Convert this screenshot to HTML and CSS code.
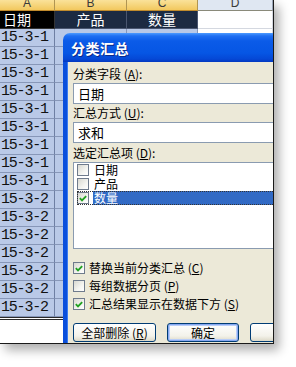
FILE: index.html
```html
<!DOCTYPE html>
<html lang="zh-CN">
<head>
<meta charset="utf-8">
<title>分类汇总</title>
<link rel="stylesheet" href="styles.css">
</head>
<body>
<div class="shot">
  <div class="sheet">
    <div class="hdr sel">A</div><div class="hdr sel">B</div><div class="hdr sel">C</div><div class="hdr">D</div>
    <div class="cell top black">日期</div><div class="cell top navy">产品</div><div class="cell top navy">数量</div><div class="cell white"></div>
    <div class="cell num">15-3-1</div><div class="cell data"></div><div class="cell data"></div><div class="cell white"></div>
    <div class="cell num">15-3-1</div><div class="cell data"></div><div class="cell data"></div><div class="cell white"></div>
    <div class="cell num">15-3-1</div><div class="cell data"></div><div class="cell data"></div><div class="cell white"></div>
    <div class="cell num">15-3-1</div><div class="cell data"></div><div class="cell data"></div><div class="cell white"></div>
    <div class="cell num">15-3-1</div><div class="cell data"></div><div class="cell data"></div><div class="cell white"></div>
    <div class="cell num">15-3-1</div><div class="cell data"></div><div class="cell data"></div><div class="cell white"></div>
    <div class="cell num">15-3-1</div><div class="cell data"></div><div class="cell data"></div><div class="cell white"></div>
    <div class="cell num">15-3-1</div><div class="cell data"></div><div class="cell data"></div><div class="cell white"></div>
    <div class="cell num">15-3-1</div><div class="cell data"></div><div class="cell data"></div><div class="cell white"></div>
    <div class="cell num">15-3-2</div><div class="cell data"></div><div class="cell data"></div><div class="cell white"></div>
    <div class="cell num">15-3-2</div><div class="cell data"></div><div class="cell data"></div><div class="cell white"></div>
    <div class="cell num">15-3-2</div><div class="cell data"></div><div class="cell data"></div><div class="cell white"></div>
    <div class="cell num">15-3-2</div><div class="cell data"></div><div class="cell data"></div><div class="cell white"></div>
    <div class="cell num">15-3-2</div><div class="cell data"></div><div class="cell data"></div><div class="cell white"></div>
    <div class="cell num">15-3-2</div><div class="cell data"></div><div class="cell data"></div><div class="cell white"></div>
    <div class="cell num">15-3-2</div><div class="cell data"></div><div class="cell data"></div><div class="cell white"></div>
  </div>

  <div class="dialog">
    <div class="titlebar">分类汇总</div>
    <div class="body">
      <div class="label">分类字段 (<u>A</u>):</div>
      <div class="combo">日期</div>
      <div class="label">汇总方式 (<u>U</u>):</div>
      <div class="combo">求和</div>
      <div class="label tall">选定汇总项 (<u>D</u>):</div>
      <div class="list">
        <div class="item"><span class="cb"></span><span class="txt">日期</span></div>
        <div class="item"><span class="cb"></span><span class="txt">产品</span></div>
        <div class="item focus"><span class="cb"><svg viewBox="0 0 11 11" width="11" height="11"><path d="M2 5.2 L4.4 7.6 L9 2.8" fill="none" stroke="#21a121" stroke-width="2"/></svg></span><span class="txt selected">数量</span></div>
      </div>
      <div class="checks">
        <div class="check"><span class="cb"><svg viewBox="0 0 11 11" width="11" height="11"><path d="M2 5.2 L4.4 7.6 L9 2.8" fill="none" stroke="#21a121" stroke-width="2"/></svg></span><span>替换当前分类汇总 (<u>C</u>)</span></div>
        <div class="check"><span class="cb"></span><span>每组数据分页 (<u>P</u>)</span></div>
        <div class="check"><span class="cb"><svg viewBox="0 0 11 11" width="11" height="11"><path d="M2 5.2 L4.4 7.6 L9 2.8" fill="none" stroke="#21a121" stroke-width="2"/></svg></span><span>汇总结果显示在数据下方 (<u>S</u>)</span></div>
      </div>
      <div class="buttons">
        <div class="btn wide">全部删除 (<u>R</u>)</div>
        <div class="btn default">确定</div>
        <div class="btn">取消</div>
      </div>
    </div>
  </div>
</div>
</body>
</html>
```

FILE: styles.css
```css
* { box-sizing: border-box; margin: 0; padding: 0; }
html, body { background: #fff; }
body {
  width: 296px;
  height: 367px;
  overflow: hidden;
  font-family: "Noto Sans CJK SC", sans-serif;
}

.shot {
  position: relative;
  width: 274px;
  height: 344px;
  overflow: hidden;
  background: #fff;
  border-right: 1px solid #1a1a1a;
  border-bottom: 1px solid #1a1a1a;
  box-shadow: 5px 6px 10px rgba(0, 0, 0, 0.32);
}

/* spreadsheet */
.sheet {
  display: grid;
  grid-template-columns: 55px 72px 71px 75px;
  grid-template-rows: 11px repeat(17, 18px);
  border-bottom: 3px double #2a2a2a;
}
.hdr {
  display: flex;
  align-items: flex-end;
  justify-content: center;
  overflow: hidden;
  font: 12px/12px "Liberation Sans", sans-serif;
  padding-bottom: 1px;
  color: #3a3a3a;
  background: #dfe7f2;
  border-right: 1px solid #9aa6b8;
  border-bottom: 1px solid #8a8a7a;
}
.hdr.sel {
  background: linear-gradient(#fae29a, #f2c85e);
  border-right-color: #b09552;
  border-bottom-color: #c08a2c;
}
.cell {
  display: flex;
  align-items: center;
  border-right: 1px solid #8797b8;
  border-bottom: 1px solid #8797b8;
  overflow: hidden;
  white-space: nowrap;
  line-height: 17px;
}
.top { font-size: 14px; color: #fff; }
.black { background: #000; padding-left: 3px; border-color: #333; }
.navy { background: #1c2a42; justify-content: center; border-color: #4a5670; }
.white { background: #fff; border-color: #d4d8e0; }
.data { background: #b9c9e7; }
.num {
  background: #b9c9e7;
  font: 15px/17px "Liberation Mono", monospace;
  letter-spacing: -1.2px;
  color: #111;
  padding-left: 1px;
  border-right-color: #6e7fa3;
}

/* dialog */
.dialog {
  position: absolute;
  left: 63px;
  top: 33px;
  width: 250px;
  height: 340px;
  display: flex;
  flex-direction: column;
  font-size: 12px;
  line-height: 14px;
  color: #000;
}
.titlebar {
  height: 29px;
  flex: none;
  display: flex;
  align-items: center;
  padding-left: 8px;
  padding-top: 1px;
  border-top-left-radius: 7px;
  background: linear-gradient(#4d9bff 0, #1f6ff2 3px, #0b5be8 8px, #0656e4 20px, #0548d6 26px, #0338c0 29px);
  color: #fff;
  font-size: 14px;
  line-height: 18px;
  font-weight: bold;
  letter-spacing: 0.5px;
  text-shadow: 1px 1px 0 #0a2a8a;
}
.body {
  flex: 1;
  display: flex;
  flex-direction: column;
  background: #ece9d8;
  border-left: 4px solid #0a4fdc;
  box-shadow: inset 1px 0 0 #3a7cf0;
  padding: 3px 0 0 6px;
}
.label {
  height: 18px;
  display: flex;
  align-items: center;
  white-space: nowrap;
}
.label.tall { height: 19px; }
.combo {
  height: 21px;
  display: flex;
  align-items: center;
  padding-left: 4px;
  background: #fff;
  border: 1px solid #8a9bb0;
  border-right: none;
  font-size: 13px;
}
.list {
  height: 87px;
  background: #fff;
  border: 1px solid #8a9bb0;
  border-right: none;
  padding: 0 0 0 3px;
  display: flex;
  flex-direction: column;
}
.item {
  height: 14px;
  display: flex;
  align-items: center;
  font-size: 12px;
  line-height: 14px;
}
.item .cb { margin-right: 4px; }
.item .txt { height: 14px; display: flex; align-items: center; padding-left: 1px; }
.item .selected {
  flex: 1;
  background: #316ac5;
  color: #fff;
}
.item.focus { outline: 1px dotted #333; outline-offset: -1px; }
.cb {
  width: 12px;
  height: 12px;
  flex: none;
  display: flex;
  align-items: center;
  justify-content: center;
  border: 1px solid #6f7b8c;
  background: linear-gradient(135deg, #d8d8d0, #f4f4f0 60%, #fff);
}
.checks {
  margin-top: 10px;
  display: flex;
  flex-direction: column;
}
.check {
  height: 18px;
  display: flex;
  align-items: center;
  gap: 4px;
  white-space: nowrap;
}
.buttons {
  margin-top: 10px;
  display: flex;
  gap: 11px;
}
.btn {
  width: 72px;
  height: 19px;
  flex: none;
  display: flex;
  align-items: center;
  justify-content: center;
  border: 1px solid #003c74;
  border-radius: 3px;
  background: linear-gradient(#ffffff, #f3f2ea 70%, #dcd9c8);
  white-space: nowrap;
}
.btn.wide { width: 83px; }
.btn.default {
  box-shadow: inset 0 0 0 1px #86a8f2, inset 0 0 0 2px #b8cdf8;
}
```
